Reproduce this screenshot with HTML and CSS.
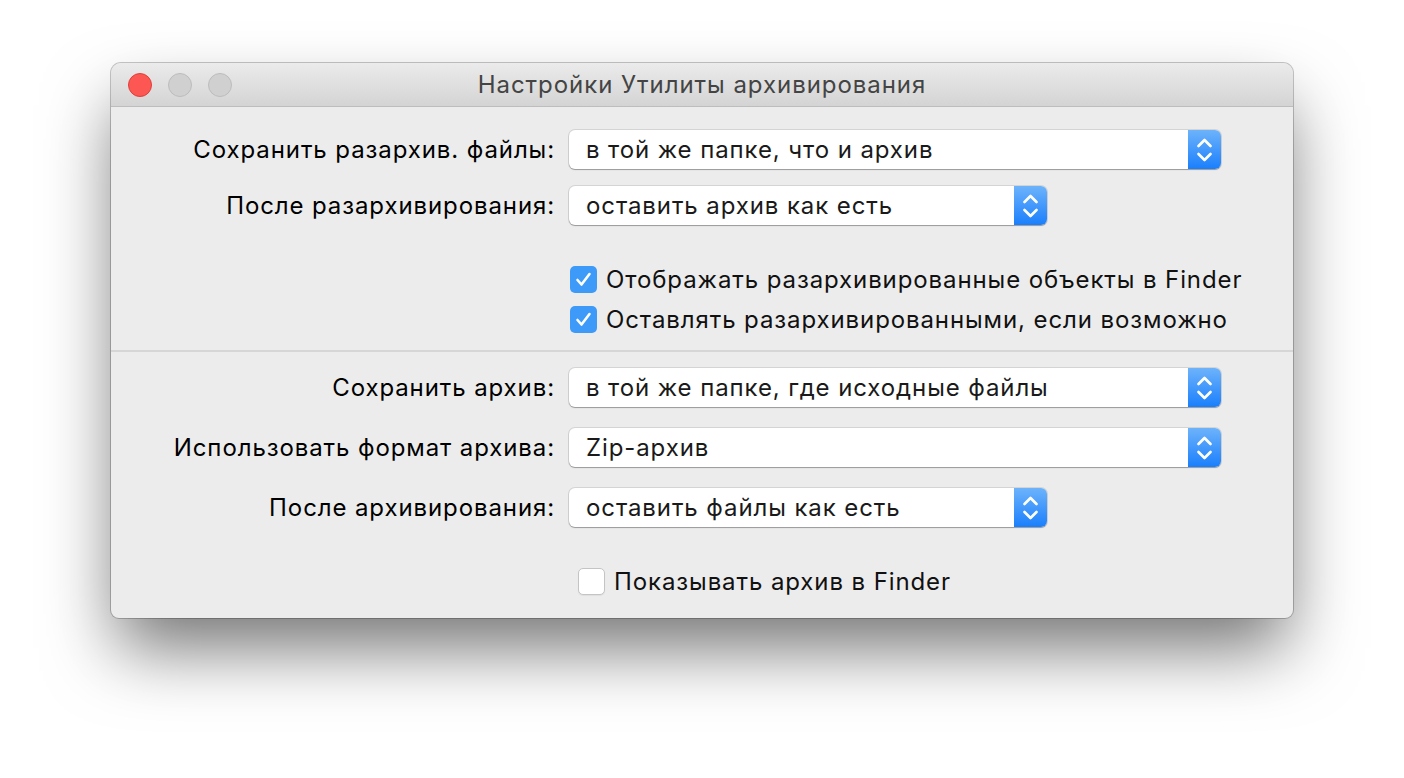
FILE: index.html
```html
<!DOCTYPE html>
<html lang="ru">
<head>
<meta charset="utf-8">
<title>Настройки Утилиты архивирования</title>
<link rel="stylesheet" href="styles.css">
</head>
<body>
<div class="window">
  <div class="titlebar">
    <div class="lights">
      <span class="light red"></span>
      <span class="light"></span>
      <span class="light"></span>
    </div>
    <div class="title">Настройки Утилиты архивирования</div>
    <div></div>
  </div>
  <div class="content">
    <section class="group">
      <div class="row">
        <span class="label">Сохранить разархив. файлы:</span>
        <div class="popup wide"><span class="value">в той же папке, что и архив</span><span class="arrows"><svg width="15" height="24" viewBox="0 0 15 24"><path d="M1.5 8 L7.5 2 L13.5 8 M1.5 16 L7.5 22 L13.5 16" fill="none" stroke="#fff" stroke-width="2.6" stroke-linecap="round" stroke-linejoin="round"/></svg></span></div>
      </div>
      <div class="row">
        <span class="label">После разархивирования:</span>
        <div class="popup narrow"><span class="value">оставить архив как есть</span><span class="arrows"><svg width="15" height="24" viewBox="0 0 15 24"><path d="M1.5 8 L7.5 2 L13.5 8 M1.5 16 L7.5 22 L13.5 16" fill="none" stroke="#fff" stroke-width="2.6" stroke-linecap="round" stroke-linejoin="round"/></svg></span></div>
      </div>
      <div class="checks">
        <div class="check"><span class="box on"><svg width="17" height="15" viewBox="0 0 17 15"><path d="M2.5 8 L6.5 12.5 L14.5 2" fill="none" stroke="#fff" stroke-width="2.6" stroke-linecap="round" stroke-linejoin="round"/></svg></span><span>Отображать разархивированные объекты в Finder</span></div>
        <div class="check"><span class="box on"><svg width="17" height="15" viewBox="0 0 17 15"><path d="M2.5 8 L6.5 12.5 L14.5 2" fill="none" stroke="#fff" stroke-width="2.6" stroke-linecap="round" stroke-linejoin="round"/></svg></span><span>Оставлять разархивированными, если возможно</span></div>
      </div>
    </section>
    <div class="sep"></div>
    <section class="group second">
      <div class="row">
        <span class="label">Сохранить архив:</span>
        <div class="popup wide"><span class="value">в той же папке, где исходные файлы</span><span class="arrows"><svg width="15" height="24" viewBox="0 0 15 24"><path d="M1.5 8 L7.5 2 L13.5 8 M1.5 16 L7.5 22 L13.5 16" fill="none" stroke="#fff" stroke-width="2.6" stroke-linecap="round" stroke-linejoin="round"/></svg></span></div>
      </div>
      <div class="row">
        <span class="label">Использовать формат архива:</span>
        <div class="popup wide"><span class="value">Zip-архив</span><span class="arrows"><svg width="15" height="24" viewBox="0 0 15 24"><path d="M1.5 8 L7.5 2 L13.5 8 M1.5 16 L7.5 22 L13.5 16" fill="none" stroke="#fff" stroke-width="2.6" stroke-linecap="round" stroke-linejoin="round"/></svg></span></div>
      </div>
      <div class="row">
        <span class="label">После архивирования:</span>
        <div class="popup narrow"><span class="value">оставить файлы как есть</span><span class="arrows"><svg width="15" height="24" viewBox="0 0 15 24"><path d="M1.5 8 L7.5 2 L13.5 8 M1.5 16 L7.5 22 L13.5 16" fill="none" stroke="#fff" stroke-width="2.6" stroke-linecap="round" stroke-linejoin="round"/></svg></span></div>
      </div>
      <div class="checks single">
        <div class="check off"><span class="box"></span><span>Показывать архив в Finder</span></div>
      </div>
    </section>
  </div>
</div>
</body>
</html>
```

FILE: styles.css
```css
html, body {
  margin: 0;
  padding: 0;
  background: #ffffff;
  width: 1404px;
  height: 778px;
  overflow: hidden;
  font-family: "Inter", "Liberation Sans", Arial, sans-serif;
}

.window {
  margin: 63px 0 0 111px;
  width: 1182px;
  height: 555px;
  border-radius: 10px 10px 8px 8px;
  background: #ececec;
  box-shadow: 0 0 0 1px rgba(0, 0, 0, 0.22), 0 36px 70px -6px rgba(0, 0, 0, 0.55);
  overflow: hidden;
  display: flex;
  flex-direction: column;
}

.titlebar {
  height: 43px;
  border-bottom: 1px solid #bdbdbd;
  background: linear-gradient(#ebebeb, #d4d4d4);
  display: grid;
  grid-template-columns: 1fr auto 1fr;
  align-items: center;
}

.lights {
  display: flex;
  gap: 16px;
  padding-left: 17px;
}

.light {
  width: 22px;
  height: 22px;
  border-radius: 50%;
  background: #d0d0d0;
  border: 1px solid #bcbcbc;
}

.light.red {
  background: #fc5753;
  border-color: #df3f3b;
}

.title {
  font-size: 24px;
  color: #444;
  letter-spacing: 0.95px;
}

.content {
  flex: 1;
  display: flex;
  flex-direction: column;
}

.group {
  display: flex;
  flex-direction: column;
  padding-top: 23px;
}

.group .row + .row {
  margin-top: 17px;
}

.group.second {
  padding-top: 16px;
}

.group.second .row + .row {
  margin-top: 21px;
}

.row {
  display: flex;
  align-items: center;
  gap: 14px;
}

.label {
  width: 444px;
  text-align: right;
  font-size: 24px;
  letter-spacing: 0.9px;
  color: #000;
}

.popup {
  height: 39px;
  display: flex;
  align-items: stretch;
  background: #fff;
  border-radius: 6px;
  box-shadow: 0 0 0 1px rgba(0, 0, 0, 0.1), 0 1px 1px rgba(0, 0, 0, 0.28);
}

.popup.wide { width: 652px; }
.popup.narrow { width: 478px; }

.value {
  flex: 1;
  padding-left: 17px;
  font-size: 24px;
  letter-spacing: 0.9px;
  color: #1a1a1a;
  display: flex;
  align-items: center;
}

.arrows {
  width: 33px;
  border-radius: 0 6px 6px 0;
  background: linear-gradient(#6db3fb, #1a7ffc);
  display: flex;
  align-items: center;
  justify-content: center;
}

.checks {
  display: flex;
  flex-direction: column;
  gap: 13px;
  margin-top: 41px;
  padding-left: 459px;
}

.check {
  display: flex;
  align-items: center;
  gap: 9px;
  height: 27px;
  line-height: 27px;
  font-size: 24px;
  letter-spacing: 0.9px;
  color: #111;
}

.box {
  width: 27px;
  height: 27px;
  border-radius: 5px;
  box-sizing: border-box;
  display: flex;
  align-items: center;
  justify-content: center;
}

.box.on {
  background: #3d9af8;
}

.checks.single {
  padding-left: 467px;
}

.check.off .box {
  background: #fff;
  border: 1px solid #c4c4c4;
  box-shadow: 0 1px 1px rgba(0, 0, 0, 0.06);
}

.sep {
  height: 2px;
  background: #d6d6d6;
  margin-top: 17px;
}
```
